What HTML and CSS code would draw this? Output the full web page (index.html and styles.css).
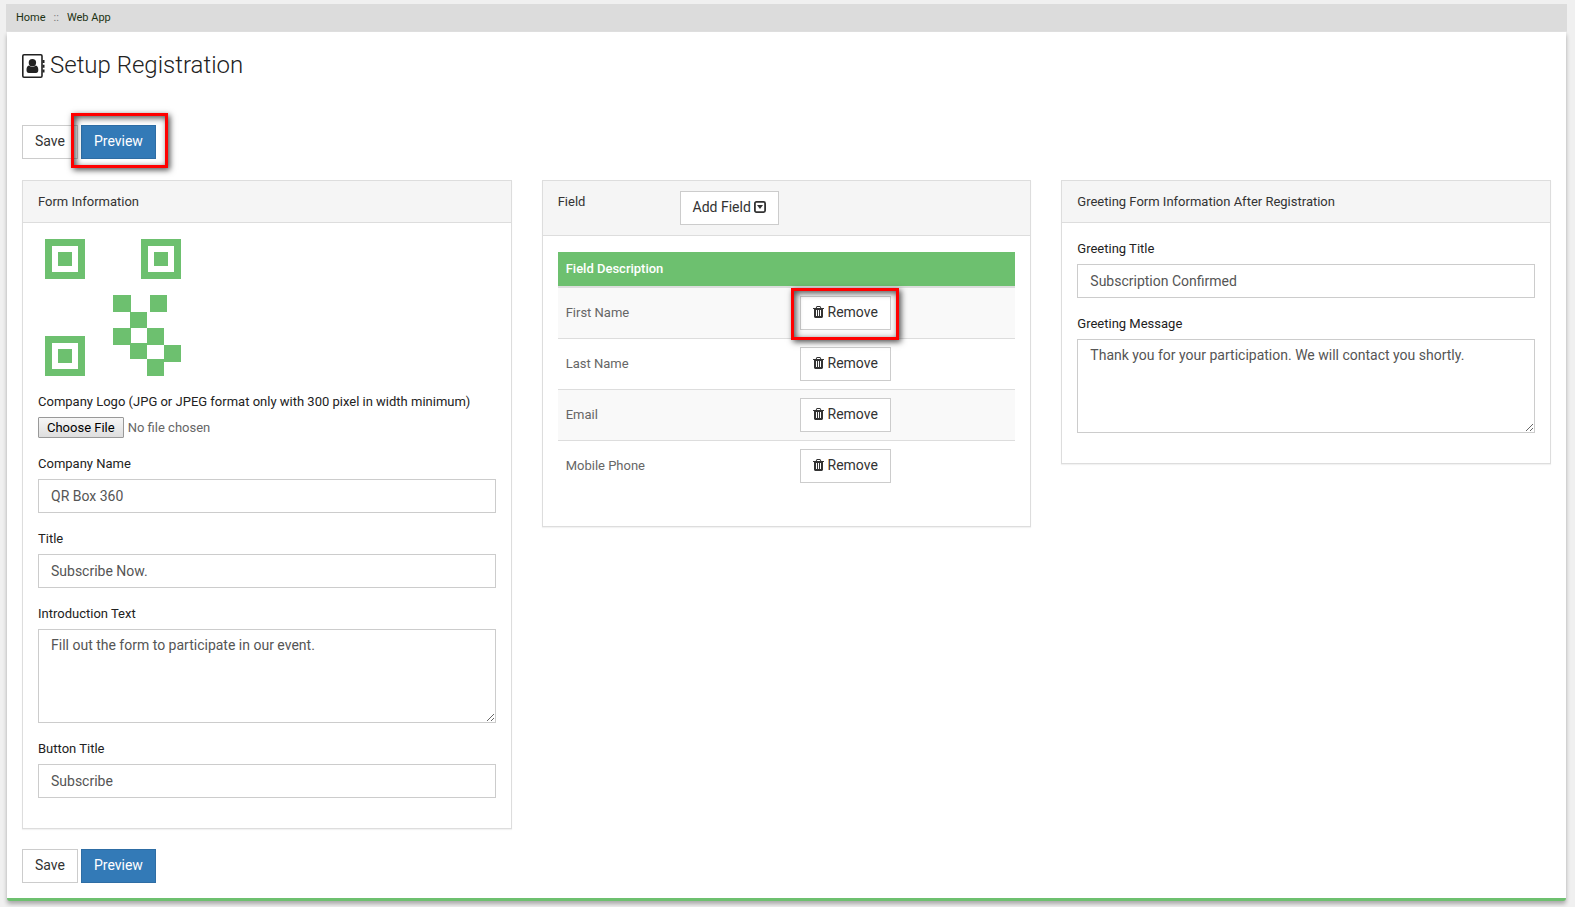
FILE: index.html
```
<!DOCTYPE html>
<html lang="en">
  <head>
    <meta charset="UTF-8" />
    <meta name="viewport" content="width=device-width, initial-scale=1.0" />
    <title>Setup Registration</title>
    <link rel="stylesheet" href="styles.css">
  </head>
  <body>
    <!-- shared icon -->
    <svg class="sprite" aria-hidden="true">
      <symbol id="trash" viewBox="192 128 1408 1536">
        <path d="M704 1376v-704q0-14-9-23t-23-9h-64q-14 0-23 9t-9 23v704q0 14 9 23t23 9h64q14 0 23-9t9-23zm256 0v-704q0-14-9-23t-23-9h-64q-14 0-23 9t-9 23v704q0 14 9 23t23 9h64q14 0 23-9t9-23zm256 0v-704q0-14-9-23t-23-9h-64q-14 0-23 9t-9 23v704q0 14 9 23t23 9h64q14 0 23-9t9-23zm-544-992h448l-48-117q-7-9-17-11h-317q-10 2-17 11zm928 32v64q0 14-9 23t-23 9h-96v948q0 83-47 143.500t-113 60.500h-832q-66 0-113-58.500t-47-141.500v-952h-96q-14 0-23-9t-9-23v-64q0-14 9-23t23-9h309l70-167q15-37 54-63t79-26h320q40 0 79 26t54 63l70 167h309q14 0 23 9t9 23z" />
      </symbol>
    </svg>

    <nav class="breadcrumb">
      <a href="#">Home</a>
      <span class="sep">::</span>
      <a href="#">Web App</a>
    </nav>

    <main class="content">
      <h1 class="title">
        <svg class="title-icon" viewBox="0 0 23 24">
          <rect x="0.800" y="0.800" width="19.200" height="22.400" rx="1.200" fill="none" stroke="currentColor" stroke-width="1.600" />
          <path d="M20.500 6h2v3h-2zM20.500 10.700h2v3h-2zM20.500 15.500h2v3h-2z" />
          <circle cx="10.400" cy="8.700" r="3.700" />
          <path d="M7 11.500c-1.800.2-2.500 2-2.500 4.500 0 2 .8 3 2.300 3h7.200c1.500 0 2.300-1 2.300-3 0-2.500-.7-4.300-2.500-4.500-2 1.900-4.800 1.900-6.800 0z" />
        </svg>
        Setup Registration
      </h1>

      <div class="actions">
        <button class="btn">Save</button>
        <span class="marker marker-preview"><button class="btn btn-primary">Preview</button></span>
      </div>

      <div class="row">
        <section class="panel">
          <div class="panel-heading">Form Information</div>
          <div class="panel-body">
            <svg class="logo" viewBox="0 0 150 153" role="img" aria-label="Company logo">
              <path fill-rule="evenodd" d="M7 1h40v40H7zM14 8v26h26V8zM20 14h14v14H20z" />
              <path fill-rule="evenodd" d="M103 1h40v40h-40zM110 8v26h26V8zM116 14h14v14h-14z" />
              <path fill-rule="evenodd" d="M7 98h40v40H7zM14 105v26h26v-26zM20 111h14v14H20z" />
              <path d="M75 57h18v17H75zM112 57h17v17h-17zM92 74h17v16H92zM75 90h18v17H75zM109 90h17v17h-17zM92 105h17v16H92zM126 107h17v17h-17zM109 121h17v17h-17z" />
            </svg>
            <div class="form-group">
              <label for="logo">Company Logo (JPG or JPEG format only with 300 pixel in width minimum)</label>
              <input type="file" id="logo" class="file">
            </div>
            <div class="form-group">
              <label for="company">Company Name</label>
              <input type="text" id="company" class="form-control" value="QR Box 360">
            </div>
            <div class="form-group">
              <label for="form-title">Title</label>
              <input type="text" id="form-title" class="form-control" value="Subscribe Now.">
            </div>
            <div class="form-group">
              <label for="intro">Introduction Text</label>
              <textarea id="intro" class="form-control">Fill out the form to participate in our event.</textarea>
            </div>
            <div class="form-group">
              <label for="button-title">Button Title</label>
              <input type="text" id="button-title" class="form-control" value="Subscribe">
            </div>
          </div>
        </section>

        <section class="panel">
          <div class="panel-heading field-heading">
            <span>Field</span>
            <button class="btn">Add Field
              <svg class="caret-icon" viewBox="0 0 12 12">
                <rect x="0.900" y="0.900" width="10.200" height="10.200" rx="1.500" fill="none" stroke="currentColor" stroke-width="1.800" />
                <path d="M3 4h6L6 8z" />
              </svg>
            </button>
          </div>
          <div class="panel-body">
            <table class="table">
              <thead>
                <tr>
                  <th>Field Description</th>
                  <th></th>
                </tr>
              </thead>
              <tbody>
                <tr>
                  <td>First Name</td>
                  <td><span class="marker marker-remove"><button class="btn"><svg class="trash-icon"><use href="#trash" /></svg> Remove</button></span></td>
                </tr>
                <tr>
                  <td>Last Name</td>
                  <td><button class="btn"><svg class="trash-icon"><use href="#trash" /></svg> Remove</button></td>
                </tr>
                <tr>
                  <td>Email</td>
                  <td><button class="btn"><svg class="trash-icon"><use href="#trash" /></svg> Remove</button></td>
                </tr>
                <tr>
                  <td>Mobile Phone</td>
                  <td><button class="btn"><svg class="trash-icon"><use href="#trash" /></svg> Remove</button></td>
                </tr>
              </tbody>
            </table>
          </div>
        </section>

        <section class="panel">
          <div class="panel-heading">Greeting Form Information After Registration</div>
          <div class="panel-body">
            <div class="form-group">
              <label for="greeting-title">Greeting Title</label>
              <input type="text" id="greeting-title" class="form-control" value="Subscription Confirmed">
            </div>
            <div class="form-group">
              <label for="greeting-message">Greeting Message</label>
              <textarea id="greeting-message" class="form-control">Thank you for your participation. We will contact you shortly.</textarea>
            </div>
          </div>
        </section>
      </div>

      <div class="actions">
        <button class="btn">Save</button>
        <button class="btn btn-primary">Preview</button>
      </div>
    </main>
  </body>
</html>
```
FILE: styles.css
```
*,
*::before,
*::after {
  box-sizing: border-box;
}

body {
  margin: 0;
  padding: 4px 8px 6px 6px;
  background-color: #f0f0f0;
  color: #666;
  font-family: Roboto, "Liberation Sans", sans-serif;
  font-size: 13px;
  line-height: 21px;
}

svg {
  fill: currentColor;
}

.sprite {
  display: none;
}

.breadcrumb {
  display: flex;
  gap: 8px;
  height: 28px;
  padding: 3px 10px;
  background-color: #dcdcdc;
  border-bottom: 1px solid #e2e2e2;
  font-size: 11px;
}
.breadcrumb a {
  color: #1c3314;
  text-decoration: none;
}
.breadcrumb .sep {
  color: #777;
}

.content {
  margin: 0 1px;
  padding: 15px;
  background-color: #fff;
  border-bottom: 3px solid #6dc06f;
  border-radius: 0 0 3px 3px;
  box-shadow: 0 3px 4px rgba(0, 0, 0, 0.3);
}

.title {
  display: flex;
  align-items: center;
  gap: 5px;
  margin: 2px 0 43px;
  color: #222;
  font-size: 24px;
  font-weight: 300;
  line-height: 33px;
}
.title-icon {
  width: 23px;
  height: 24px;
}

.actions {
  display: flex;
  gap: 3px;
}

.btn {
  height: 34px;
  padding: 0 12px 2px;
  background-color: #fff;
  border: 1px solid #ccc;
  color: #333;
  font-family: inherit;
  font-size: 14px;
  line-height: 20px;
  white-space: nowrap;
  cursor: pointer;
}
.btn-primary {
  background-color: #337ab7;
  border-color: #2e6da4;
  color: #fff;
}
.trash-icon {
  width: 11px;
  height: 12px;
  vertical-align: -1px;
}
.caret-icon {
  width: 12px;
  height: 12px;
  vertical-align: -1px;
}

/* red callouts over the buttons */
.marker {
  display: inline-block;
  position: relative;
}
.marker::after {
  content: "";
  position: absolute;
  border: 3px solid #f00;
  box-shadow: 2px 2px 6px rgba(0, 0, 0, 0.7), inset 2px 2px 6px rgba(0, 0, 0, 0.7);
  pointer-events: none;
}
.marker-preview::after {
  inset: -12px -12px -9px -10px;
}
.marker-remove::after {
  inset: -8px -8px -10px -9px;
}

.row {
  display: grid;
  grid-template-columns: repeat(3, 1fr);
  align-items: start;
  gap: 30px;
  margin: 21px 0 20px;
}

.panel {
  border: 1px solid #ddd;
  box-shadow: 0 1px 1px rgba(0, 0, 0, 0.05);
}
.panel-heading {
  padding: 10px 15px;
  background-color: #f5f5f5;
  border-bottom: 1px solid #ddd;
  color: #333;
}
.field-heading {
  display: grid;
  grid-template-columns: 1fr 3fr;
  column-gap: 10px;
  align-items: start;
}
.field-heading .btn {
  justify-self: start;
}
.panel-body {
  padding: 15px;
}

.logo {
  display: block;
  width: 150px;
  height: 153px;
  color: #6dc06f;
}

.form-group {
  margin-bottom: 15px;
}
.form-group label {
  display: block;
  margin-bottom: 5px;
  color: #222;
}
.form-control {
  display: block;
  width: 100%;
  height: 34px;
  padding: 6px 12px;
  background-color: #fff;
  border: 1px solid #ccc;
  color: #555;
  font-family: inherit;
  font-size: 14px;
  line-height: 20px;
}
textarea.form-control {
  height: 94px;
  padding-top: 5px;
  resize: vertical;
}

.file {
  display: block;
  width: 100%;
  height: 21px;
  font-family: inherit;
  font-size: 13px;
}
.file::file-selector-button {
  height: 21px;
  padding: 0 8px;
  background: linear-gradient(#f6f6f6, #dedede);
  border: 1px solid #999;
  border-radius: 1px;
  color: #000;
  font-family: inherit;
  font-size: 13px;
}

.table {
  width: 100%;
  margin: 1px 0 20px;
  border-collapse: separate;
  border-spacing: 0;
}
.table th {
  width: 51%;
  padding: 8px;
  background-color: #6dc06f;
  border-bottom: 2px solid #ddd;
  color: #fff;
  font-weight: 500;
  line-height: 18px;
  text-align: left;
}
.table th:last-child {
  width: 49%;
}
.table td {
  padding: 7px 8px 9px;
  border-top: 1px solid #ddd;
}
.table td:last-child {
  padding: 8px 9px;
}
.table td .btn {
  display: block;
}
.table tr:first-child td {
  border-top: 0;
}
.table tbody tr:nth-child(odd) {
  background-color: #f9f9f9;
}
```
